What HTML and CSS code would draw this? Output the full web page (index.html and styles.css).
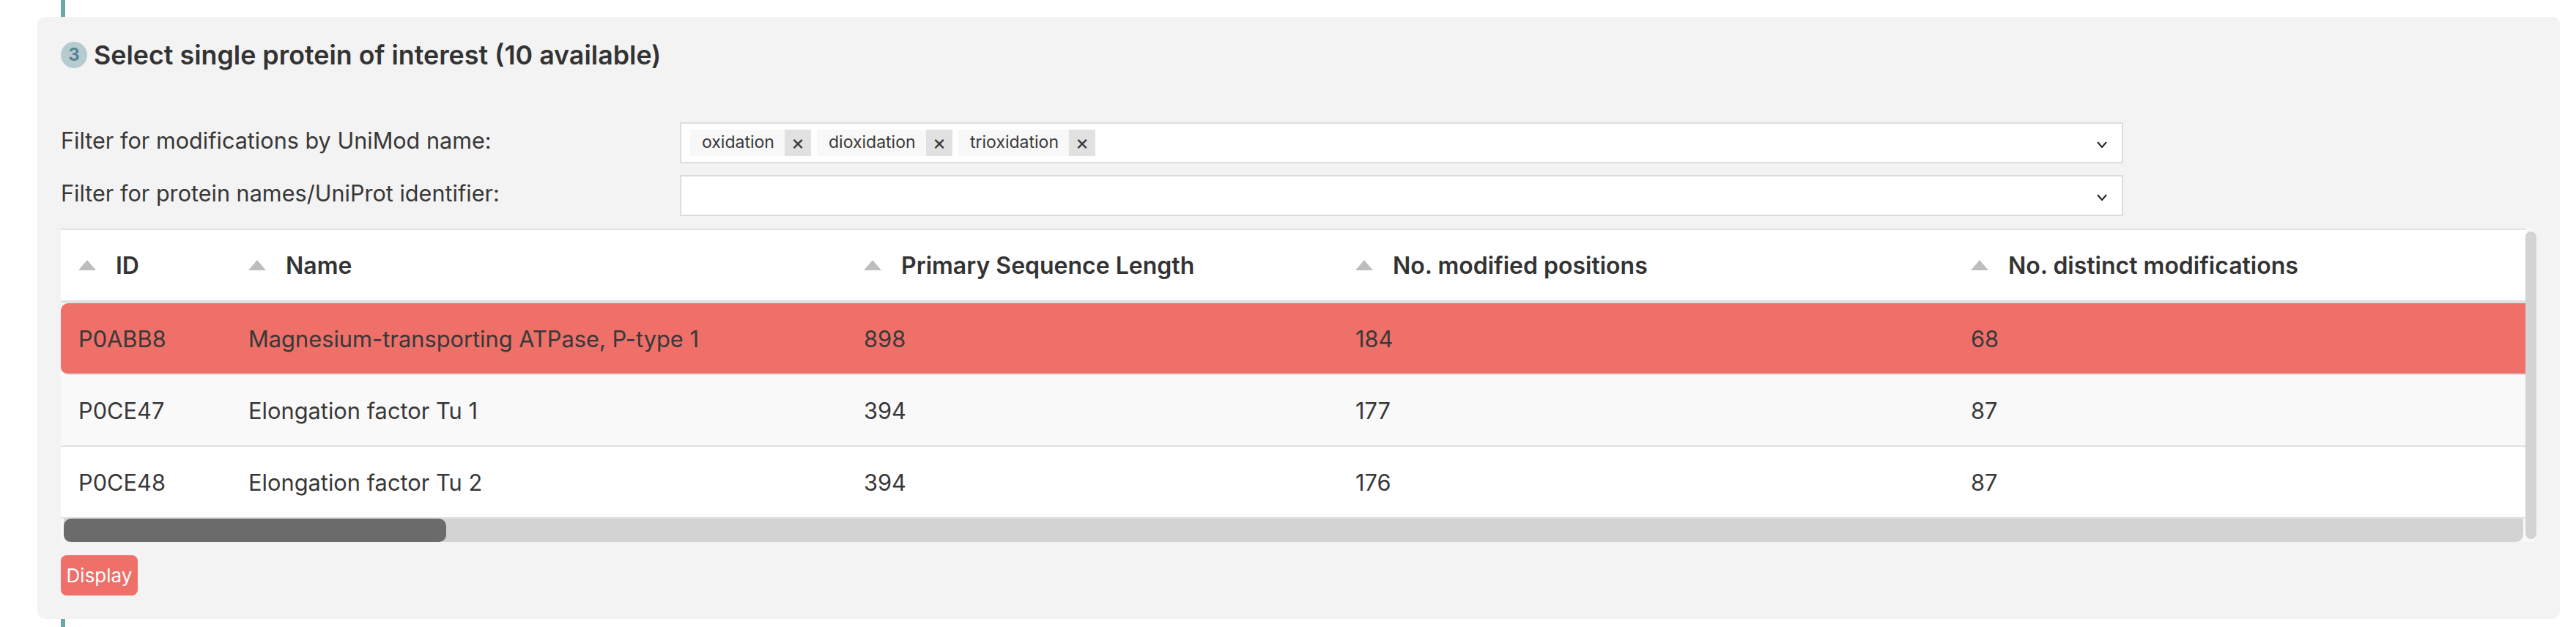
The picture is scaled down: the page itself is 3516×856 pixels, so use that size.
FILE: index.html
```html
<!DOCTYPE html>
<html lang="en">
<head>
<meta charset="utf-8">
<title>Select single protein</title>
<link rel="stylesheet" href="styles.css">
</head>
<body>
<div class="stem stem-top"></div>
<section class="panel">
  <h2 class="heading"><span class="step">3</span><span>Select single protein of interest (10 available)</span></h2>
  <div class="filters">
    <div class="filter">
      <label class="filter-label">Filter for modifications by UniMod name:</label>
      <div class="select">
        <div class="tags">
          <span class="tag"><span class="tag-name">oxidation</span><span class="tag-x">×</span></span>
          <span class="tag"><span class="tag-name">dioxidation</span><span class="tag-x">×</span></span>
          <span class="tag"><span class="tag-name">trioxidation</span><span class="tag-x">×</span></span>
        </div>
        <svg class="chevron" width="14" height="9" viewBox="0 0 14 9"><path d="M1 1l6 7 6-7" fill="none" stroke="#222" stroke-width="2"/></svg>
      </div>
    </div>
    <div class="filter">
      <label class="filter-label">Filter for protein names/UniProt identifier:</label>
      <div class="select">
        <div class="tags"></div>
        <svg class="chevron" width="14" height="9" viewBox="0 0 14 9"><path d="M1 1l6 7 6-7" fill="none" stroke="#222" stroke-width="2"/></svg>
      </div>
    </div>
  </div>
  <div class="table-frame">
    <div class="table-main">
      <table class="grid">
        <colgroup><col class="c1"><col class="c2"><col class="c3"><col class="c4"><col class="c5"></colgroup>
        <thead>
          <tr>
            <th><span class="th-in"><i class="sort"></i>ID</span></th>
            <th><span class="th-in"><i class="sort"></i>Name</span></th>
            <th><span class="th-in"><i class="sort"></i>Primary Sequence Length</span></th>
            <th><span class="th-in"><i class="sort"></i>No. modified positions</span></th>
            <th><span class="th-in"><i class="sort"></i>No. distinct modifications</span></th>
          </tr>
        </thead>
        <tbody>
          <tr class="selected"><td>P0ABB8</td><td>Magnesium-transporting ATPase, P-type 1</td><td>898</td><td>184</td><td>68</td></tr>
          <tr class="odd"><td>P0CE47</td><td>Elongation factor Tu 1</td><td>394</td><td>177</td><td>87</td></tr>
          <tr><td>P0CE48</td><td>Elongation factor Tu 2</td><td>394</td><td>176</td><td>87</td></tr>
        </tbody>
      </table>
      <div class="hscroll"><div class="hthumb"></div></div>
    </div>
    <div class="vscroll"></div>
  </div>
  <button class="display" type="button">Display</button>
</section>
<div class="stem stem-bottom"></div>
</body>
</html>
```
FILE: styles.css
```css
* { box-sizing: border-box; }
html, body { margin: 0; padding: 0; background: #fff; }
body { font-family: Inter, "Liberation Sans", sans-serif; color: #383838; height: 856px; overflow: hidden; }

.stem { width: 6px; margin-left: 83px; background: #6fa5a8; }
.stem-top { height: 23px; }
.stem-bottom { height: 11px; }

.panel { margin-left: 51px; width: 3443px; height: 822px; padding: 34px 32px 32px; background: #f3f3f3; border-radius: 10px; }

.heading { display: flex; align-items: center; gap: 9px; margin: 0; height: 36px; font-size: 35.8px; font-weight: 600; line-height: 36px; color: #333; }
.step { flex: none; width: 36px; height: 36px; border-radius: 50%; background: #b5cbcf; color: #558692; font-size: 24px; font-weight: 700; text-align: center; line-height: 36px; }

.filters { display: flex; flex-direction: column; gap: 16px; margin-top: 74px; }
.filter { display: flex; align-items: center; height: 56px; }
.filter-label { flex: none; width: 845px; margin-bottom: 6px; font-size: 30.6px; line-height: 40px; }
.select { display: flex; align-items: center; justify-content: space-between; width: 1970px; height: 56px; padding: 0 20px 0 12px; background: #fff; border: 2px solid #dcdcdc; }
.tags { display: flex; gap: 8px; }
.tag { display: flex; height: 36px; font-size: 23px; line-height: 34px; }
.tag-name { background: #f8f8f8; width: 129px; padding: 0 0 0 16px; white-space: nowrap; }
.tag:nth-child(2) .tag-name { width: 149px; }
.tag:nth-child(3) .tag-name { width: 151px; }
.tag-x { width: 36px; background: #e1e1e1; text-align: center; font-size: 28px; }
.chevron { flex: none; margin-top: 4px; }

.table-frame { display: flex; margin-top: 17px; width: 3379px; height: 428px; background: #f9f9f9; border-radius: 10px; }
.table-main { width: 3364px; height: 428px; }
.grid { width: 3364px; table-layout: fixed; border-collapse: separate; border-spacing: 0; background: #fff; font-size: 30.8px; }
.c1 { width: 232px; }
.c2 { width: 840px; }
.c3 { width: 671px; }
.c4 { width: 840px; }
.c5 { width: 781px; }
th { height: 102px; padding: 0 24px; border-top: 2px solid #dee2e6; border-bottom: 4px solid #dee2e6; text-align: left; font-size: 32px; font-weight: 600; color: #333; white-space: nowrap; }
.th-in { display: flex; align-items: center; }
.sort { flex: none; width: 0; height: 0; margin-right: 27px; border-left: 12px solid transparent; border-right: 12px solid transparent; border-bottom: 14px solid #bdbdbd; }
td { height: 98px; padding: 0 24px; border-bottom: 2px solid #dee2e6; white-space: nowrap; }
.selected td { background: #ee7069; }
.selected td:first-child { border-bottom-left-radius: 10px; border-top-left-radius: 10px; }
.odd td { background: #f9f9f9; }

.hscroll { width: 3361px; height: 32px; background: #d3d3d3; border-radius: 0 0 10px 10px; padding-left: 4px; background-clip: content-box; }
.hthumb { width: 522px; height: 32px; background: #6b6b6b; border-radius: 10px; }
.vscroll { width: 15px; height: 420px; margin-top: 4px; background: #d3d3d3; border-radius: 8px; }

.display { display: block; margin: 18px 0 0; width: 105px; height: 55px; padding: 0; border: 0; border-radius: 8px; background: #ee7069; color: #fff; font: 26px Inter, "Liberation Sans", sans-serif; }
```
